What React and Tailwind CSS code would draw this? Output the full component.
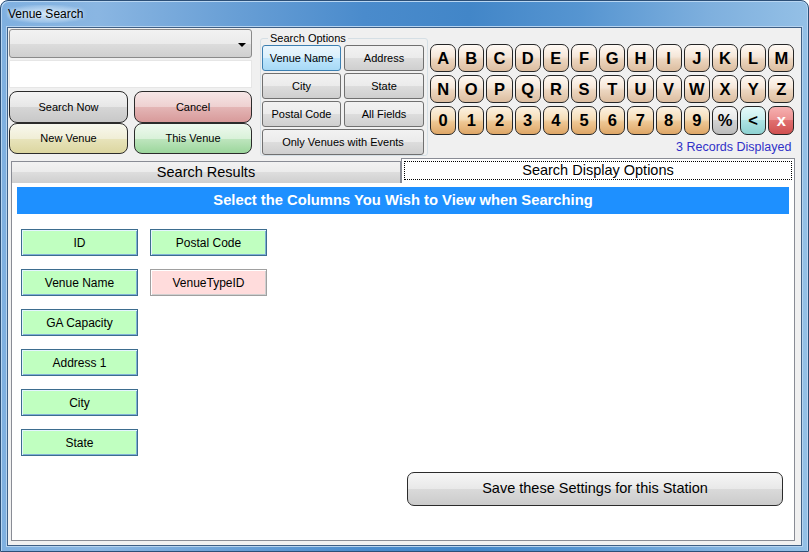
import React from "react";

const ROW1 = ["A", "B", "C", "D", "E", "F", "G", "H", "I", "J", "K", "L", "M"];
const ROW2 = ["N", "O", "P", "Q", "R", "S", "T", "U", "V", "W", "X", "Y", "Z"];
const ROW3 = ["0", "1", "2", "3", "4", "5", "6", "7", "8", "9"];

const LETTER_KEY =
  "bg-[linear-gradient(#fffaf5,#f5e6d8_45%,#ecd6c0_55%,#dcbd9f)]";
const NUMBER_KEY =
  "bg-[linear-gradient(#fcf2e2,#f5ddb8_45%,#eec794_55%,#dea666)]";

const WIN_BTN =
  "bg-[linear-gradient(#f2f2f2,#ebebeb_50%,#dddddd_50%,#cfcfcf)] border-[#707070]";
const WIN_BTN_ON =
  "bg-[linear-gradient(#eaf6fd,#d9f0fc_50%,#bee6fd_50%,#a7d9f5)] border-[#3c7fb1]";

function Key({ label, tone = LETTER_KEY, text = "text-black" }) {
  return (
    <div
      className={`h-full flex items-center justify-center rounded-[7px] border border-[#262626] text-[16.5px] font-bold ${tone} ${text}`}
    >
      {label}
    </div>
  );
}

function OptionButton({ label, active, className = "" }) {
  return (
    <div
      className={`h-[26px] flex items-center justify-center rounded-[3px] border text-[11px] text-black ${
        active ? WIN_BTN_ON : WIN_BTN
      } ${className}`}
    >
      {label}
    </div>
  );
}

function ColumnButton({ label, off }) {
  return (
    <div
      className={`w-[117px] h-[27px] flex items-center justify-center text-[12px] text-black border ${
        off
          ? "bg-[#ffdcdc] border-[#a0a0a0] shadow-[inset_1px_1px_0_#fff,inset_-1px_-1px_0_#d0d0d0]"
          : "bg-[#c0ffc0] border-[#3d6d8f] shadow-[inset_1px_1px_0_#e4f4ff,inset_-1px_-1px_0_#7fb0d6]"
      }`}
    >
      {label}
    </div>
  );
}

export default function App() {
  return (
    <div className="w-[809px] h-[552px] bg-white overflow-hidden font-['Liberation_Sans',Arial,sans-serif]">
      <div className="h-full flex flex-col rounded-t-[8px] border border-[#2c4f77] bg-[linear-gradient(90deg,#7fb0e0,#8ab6e2_12%,#6aa0d6_28%,#4a8bcc_45%,#4286c8_58%,#5695d1_72%,#7fb0de_88%,#94c0e6)] px-[6px] pb-[5px] shadow-[inset_1px_1px_0_#b8d6f2,inset_-1px_0_0_#b8d6f2]">
        {/* title bar */}
        <div className="h-[26px] flex items-center">
          <span className="px-[1px] rounded-full bg-[radial-gradient(ellipse_at_center,rgba(220,236,250,0.85),rgba(200,224,246,0.4)_60%,transparent_80%)] text-[12px] text-black [text-shadow:0_0_4px_#e8f2fc]">
            Venue Search
          </span>
        </div>

        {/* client area */}
        <div className="flex-1 flex flex-col border border-[#3e5f85] bg-[#f0f0f0] outline outline-1 outline-[#b6d3ef]">
          {/* top controls */}
          <div className="h-[130px] flex">
            {/* left column */}
            <div className="ml-[1px] mt-[1px] w-[243px] flex flex-col">
              <div className="h-[29px] relative rounded-[3px] border border-[#8a8a8a] bg-[linear-gradient(#f2f2f2,#ebebeb_50%,#dddddd_50%,#cfcfcf)]">
                <span className="absolute right-[5px] top-[13px] w-0 h-0 border-l-[4px] border-r-[4px] border-t-[4px] border-l-transparent border-r-transparent border-t-black" />
              </div>
              <div className="mt-[2px] h-[28px] bg-white border border-[#e6e6e6]" />
              <div className="mt-[3px] grid grid-cols-[119px_118px] gap-x-[6px] grid-rows-[32px_31px]">
                <div className="flex items-center justify-center rounded-[8px] border border-[#2b2b2b] text-[11px] bg-[linear-gradient(#f4f4f4,#e6e6e6_50%,#d6d6d6_50%,#c8c8c8)]">
                  Search Now
                </div>
                <div className="flex items-center justify-center rounded-[8px] border border-[#2b2b2b] text-[11px] bg-[linear-gradient(#f6e6e6,#eed0d0_50%,#e4b6b6_50%,#d89a9a)]">
                  Cancel
                </div>
                <div className="flex items-center justify-center rounded-[8px] border border-[#2b2b2b] text-[11px] bg-[linear-gradient(#f8f8ee,#f0eed6_50%,#e8e4bc_50%,#dcd6a0)]">
                  New Venue
                </div>
                <div className="flex items-center justify-center rounded-[8px] border border-[#2b2b2b] text-[11px] bg-[linear-gradient(#eff9ef,#d9f1d9_50%,#bfe6bf_50%,#9cd69c)]">
                  This Venue
                </div>
              </div>
            </div>

            {/* search options group */}
            <div className="ml-[8px] mt-[10px] w-[168px] h-[118px] relative rounded-[3px] border border-[#d5dfe5] pl-[1px] pt-[6px]">
              <span className="absolute left-[7px] -top-[8px] bg-[#f0f0f0] px-[2px] text-[11px] text-black leading-[14px]">
                Search Options
              </span>
              <div className="grid grid-cols-[79px_80px] gap-x-[3px] gap-y-[2px]">
                <OptionButton label="Venue Name" active />
                <OptionButton label="Address" />
                <OptionButton label="City" />
                <OptionButton label="State" />
                <OptionButton label="Postal Code" />
                <OptionButton label="All Fields" />
                <OptionButton label="Only Venues with Events" className="col-span-2" />
              </div>
            </div>

            {/* keyboard */}
            <div className="ml-[2px] flex flex-col">
              <div className="mt-[16px] grid grid-cols-[repeat(13,26.2px)] gap-x-[2px] grid-rows-[28px_28px_29px] gap-y-[3px]">
                {ROW1.map((k) => (
                  <Key key={k} label={k} />
                ))}
                {ROW2.map((k) => (
                  <Key key={k} label={k} />
                ))}
                {ROW3.map((k) => (
                  <Key key={k} label={k} tone={NUMBER_KEY} />
                ))}
                <Key
                  label="%"
                  tone="bg-[linear-gradient(#f8f8f8,#e6e6e6_50%,#d2d2d2_50%,#bcbcbc)]"
                />
                <Key
                  label="<"
                  tone="bg-[linear-gradient(#e6fafa,#c8eeee_50%,#ade3e3_50%,#8ed2d2)]"
                />
                <Key
                  label="x"
                  tone="bg-[linear-gradient(#f6b0b0,#ec9090_50%,#e07070_50%,#d05050)]"
                  text="text-white"
                />
              </div>
              <div className="mt-[3px] pr-[3px] text-right text-[12.5px] text-[#3030c8]">
                3 Records Displayed
              </div>
            </div>
          </div>

          {/* tabs */}
          <div className="relative z-10 -mb-[1px] h-[25px] flex items-end pl-[3px]">
            <div className="w-[390px] h-[22px] flex items-center justify-center border border-[#898c95] border-b-0 bg-[linear-gradient(#f2f2f2,#ebebeb_50%,#dddddd_50%,#cfcfcf)] text-[14.5px] text-black">
              Search Results
            </div>
            <div className="w-[394px] h-[25px] p-[2px] pb-[3px] border border-[#898c95] border-b-0 bg-white">
              <div className="h-full flex items-center justify-center border border-dotted border-black text-[14.5px] text-black">
                Search Display Options
              </div>
            </div>
          </div>

          {/* tab page */}
          <div className="flex-1 mx-[3px] mr-[6px] mb-[4px] border border-[#898c95] bg-white px-[5px] pt-[4px] flex flex-col">
            <div className="h-[27px] bg-[#1e90ff] flex items-center justify-center text-white font-bold text-[14.75px]">
              Select the Columns You Wish to View when Searching
            </div>

            <div className="mt-[15px] ml-[4px] flex gap-x-[12px]">
              <div className="flex flex-col gap-y-[13px]">
                <ColumnButton label="ID" />
                <ColumnButton label="Venue Name" />
                <ColumnButton label="GA Capacity" />
                <ColumnButton label="Address 1" />
                <ColumnButton label="City" />
                <ColumnButton label="State" />
              </div>
              <div className="flex flex-col gap-y-[13px]">
                <ColumnButton label="Postal Code" />
                <ColumnButton label="VenueTypeID" off />
              </div>
            </div>

            <div className="mt-[16px] flex justify-end pr-[6px]">
              <div className="w-[376px] h-[34px] flex items-center justify-center rounded-[7px] border border-[#2b2b2b] bg-[linear-gradient(#f6f6f6,#e8e8e8_50%,#dadada_50%,#cbcbcb)] text-[14.5px] text-black">
                Save these Settings for this Station
              </div>
            </div>
          </div>
        </div>
      </div>
    </div>
  );
}
